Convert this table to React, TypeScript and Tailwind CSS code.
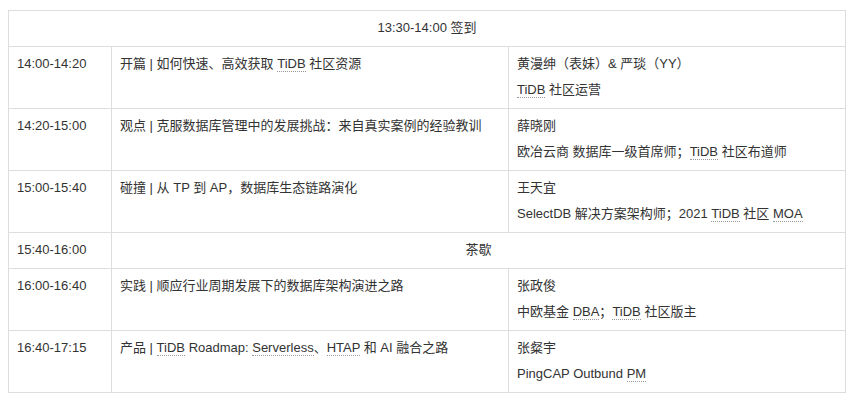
import React from 'react';

type Row = {
  time: string;
  title?: React.ReactNode;
  name?: string;
  role?: React.ReactNode;
  span?: string;
};

// gray dotted underline on terms
const Term = ({ children }: { children: React.ReactNode }) => (
  <span className="border-b border-dotted border-[#999]">{children}</span>
);

const rows: Row[] = [
  {
    time: '14:00-14:20',
    title: <>开篇 | 如何快速、高效获取 <Term>TiDB</Term> 社区资源</>,
    name: '黄漫绅（表妹）& 严琰（YY）',
    role: <><Term>TiDB</Term> 社区运营</>,
  },
  {
    time: '14:20-15:00',
    title: '观点 | 克服数据库管理中的发展挑战：来自真实案例的经验教训',
    name: '薛晓刚',
    role: <>欧冶云商 数据库一级首席师；<Term>TiDB</Term> 社区布道师</>,
  },
  {
    time: '15:00-15:40',
    title: '碰撞 | 从 TP 到 AP，数据库生态链路演化',
    name: '王天宜',
    role: <>SelectDB 解决方案架构师；2021 <Term>TiDB</Term> 社区 <Term>MOA</Term></>,
  },
  { time: '15:40-16:00', span: '茶歇' },
  {
    time: '16:00-16:40',
    title: '实践 | 顺应行业周期发展下的数据库架构演进之路',
    name: '张政俊',
    role: <>中欧基金 <Term>DBA</Term>；<Term>TiDB</Term> 社区版主</>,
  },
  {
    time: '16:40-17:15',
    title: <>产品 | <Term>TiDB</Term> Roadmap: <Term>Serverless</Term>、<Term>HTAP</Term> 和 AI 融合之路</>,
    name: '张粲宇',
    role: <>PingCAP Outbund <Term>PM</Term></>,
  },
];

const cell = 'border-r border-b border-[#ddd] px-2 pt-[4px] pb-[5px]';

export default function App() {
  return (
    <div className="min-h-screen bg-white pl-2 pt-[10px]">
      <div
        className="grid w-[838px] grid-cols-[103px_397px_337px] border-l border-t border-[#ddd] text-[13px] leading-[26px] text-[#333]"
        style={{ fontFamily: '"Liberation Sans", Arial, "Noto Sans CJK SC", sans-serif' }}
      >
        <div className={`${cell} col-span-3 text-center`}>13:30-14:00 签到</div>
        {rows.map((r) => (
          <React.Fragment key={r.time}>
            <div className={cell}>{r.time}</div>
            {r.span ? (
              <div className={`${cell} col-span-2 text-center`}>{r.span}</div>
            ) : (
              <>
                <div className={cell}>{r.title}</div>
                <div className={cell}>
                  <div>{r.name}</div>
                  <div>{r.role}</div>
                </div>
              </>
            )}
          </React.Fragment>
        ))}
      </div>
    </div>
  );
}
